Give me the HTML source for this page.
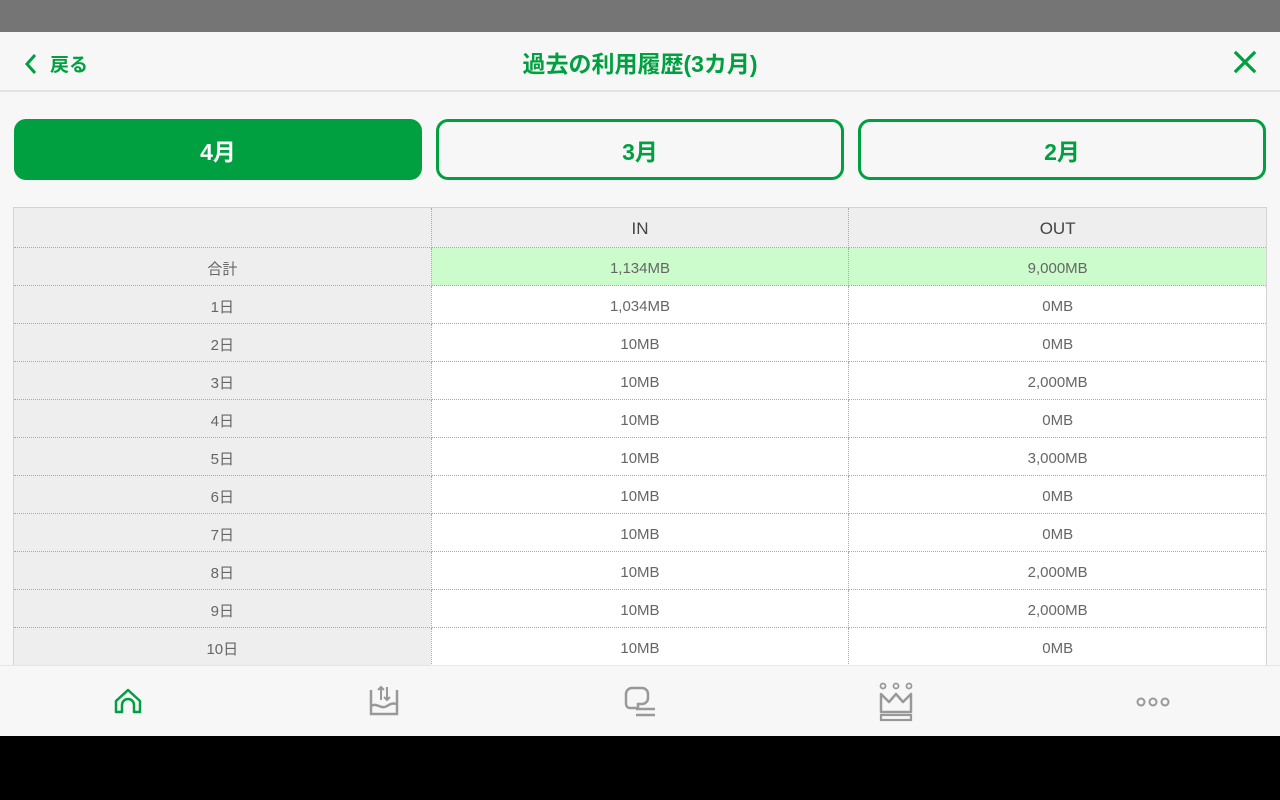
<!DOCTYPE html>
<html><head><meta charset="utf-8"><style>
*{margin:0;padding:0;box-sizing:border-box}
body{width:1280px;height:800px;background:#000;font-family:"Liberation Sans","Noto Sans CJK JP",sans-serif;position:relative;overflow:hidden}
.status{position:absolute;top:0;left:0;width:1280px;height:32px;background:#757575}
.app{position:absolute;top:32px;left:0;width:1280px;height:704px;background:#f7f7f7;overflow:hidden}
.hdr{height:60px;border-bottom:2px solid #e2e2e2;position:relative}
.back{position:absolute;left:22px;top:18px;color:#00a040;font-weight:bold;font-size:19px;display:flex;align-items:center}
.title{position:absolute;left:0;right:0;top:13px;text-align:center;color:#00a040;font-weight:bold;font-size:23px}
.close{position:absolute;right:23px;top:18px}
.tab{position:absolute;top:87px;width:408px;height:61px;border:3px solid #00a040;border-radius:12px;color:#00a040;font-weight:bold;font-size:23px;text-align:center;line-height:61px;background:#f7f7f7}
.tab.on{background:#00a040;color:#fff}
table{position:absolute;left:13px;top:175px;width:1254px;border-collapse:collapse;border:1px solid #d4d4d4}
td{border:1px dotted #aaa;height:38px;text-align:center;font-size:15px;color:#666;background:#fff;width:418px;padding-top:3px}
td:first-child{background:#eee}
tr.h td{background:#eee;height:40px;font-size:17px;color:#444}
tr.s td{background:#ccfccc}
tr.s td:first-child{background:#eee}
.nav{position:absolute;left:0;top:633px;width:1280px;height:71px;background:#f7f7f7;border-top:1px solid #e6e6e6}
.nav svg{position:absolute}
</style></head><body>
<div class="status"></div>
<div class="app">
<div class="hdr">
<div class="back"><svg width="18" height="24" viewBox="0 0 18 24"><path d="M13 3L5 12l8 9" stroke="#00a040" stroke-width="3" fill="none"/></svg><span style="margin-left:10px">戻る</span></div>
<div class="title">過去の利用履歴(3カ月)</div>
<svg class="close" width="24" height="24" viewBox="0 0 26 26"><path d="M2 2L24 24M24 2L2 24" stroke="#00a040" stroke-width="3.5"/></svg>
</div>
<div class="tab on" style="left:14px">4月</div>
<div class="tab" style="left:436px">3月</div>
<div class="tab" style="left:858px">2月</div>
<table>
<tr class="h"><td></td><td>IN</td><td>OUT</td></tr>
<tr class="s"><td>合計</td><td>1,134MB</td><td>9,000MB</td></tr>
<tr><td>1日</td><td>1,034MB</td><td>0MB</td></tr>
<tr><td>2日</td><td>10MB</td><td>0MB</td></tr>
<tr><td>3日</td><td>10MB</td><td>2,000MB</td></tr>
<tr><td>4日</td><td>10MB</td><td>0MB</td></tr>
<tr><td>5日</td><td>10MB</td><td>3,000MB</td></tr>
<tr><td>6日</td><td>10MB</td><td>0MB</td></tr>
<tr><td>7日</td><td>10MB</td><td>0MB</td></tr>
<tr><td>8日</td><td>10MB</td><td>2,000MB</td></tr>
<tr><td>9日</td><td>10MB</td><td>2,000MB</td></tr>
<tr><td>10日</td><td>10MB</td><td>0MB</td></tr>
<tr><td>11日</td><td>10MB</td><td>0MB</td></tr>
</table>
<div class="nav">
<svg style="left:112px;top:20px" width="32" height="32" viewBox="0 0 32 32"><path d="M4 26V15L16 4l12 11v11h-6v-7a6 6 0 0 0-12 0v7z" stroke="#00a040" stroke-width="2.5" fill="none" stroke-linejoin="round"/></svg>
<svg style="left:368px;top:18px" width="32" height="34" viewBox="0 0 32 34"><path d="M3 6v24h26V6M3 22c6-4 10 4 16 0s8-2 10-2" stroke="#999" stroke-width="2.5" fill="none"/><path d="M13 16V3M10 6l3-3 3 3M19 3v13M16 13l3 3 3-3" stroke="#999" stroke-width="2" fill="none"/></svg>
<svg style="left:624px;top:20px" width="34" height="32" viewBox="0 0 34 32"><path d="M14 22H6a4 4 0 0 1-4-4V8a6 6 0 0 1 6-6h10a6 6 0 0 1 6 6v4a6 6 0 0 1-6 6h-4z" stroke="#999" stroke-width="2.5" fill="none"/><path d="M12 23h19M12 29h19" stroke="#999" stroke-width="2.5"/></svg>
<svg style="left:878px;top:16px" width="36" height="40" viewBox="0 0 36 40"><circle cx="5" cy="4" r="2.5" stroke="#999" stroke-width="1.8" fill="none"/><circle cx="18" cy="4" r="2.5" stroke="#999" stroke-width="1.8" fill="none"/><circle cx="31" cy="4" r="2.5" stroke="#999" stroke-width="1.8" fill="none"/><path d="M3 30V12l8 8 7-8 7 8 8-8v18z" stroke="#999" stroke-width="2.5" fill="none" stroke-linejoin="round"/><rect x="3" y="33" width="30" height="5" stroke="#999" stroke-width="2.2" fill="none"/></svg>
<svg style="left:1136px;top:30px" width="34" height="12" viewBox="0 0 34 12"><circle cx="5" cy="6" r="3.5" stroke="#999" stroke-width="2" fill="none"/><circle cx="17" cy="6" r="3.5" stroke="#999" stroke-width="2" fill="none"/><circle cx="29" cy="6" r="3.5" stroke="#999" stroke-width="2" fill="none"/></svg>
</div>
</div>
</body></html>
